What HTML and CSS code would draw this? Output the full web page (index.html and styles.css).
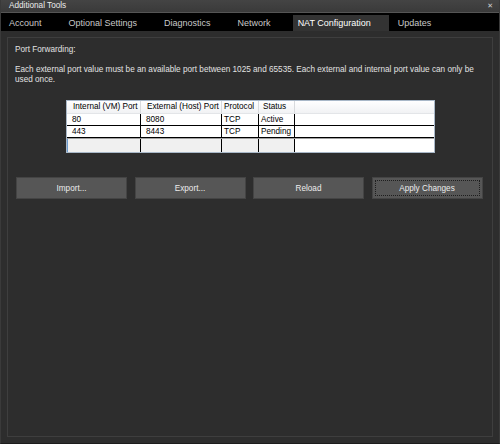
FILE: index.html
```html
<!DOCTYPE html>
<html>
<head>
<meta charset="utf-8">
<link rel="stylesheet" href="styles.css">
</head>
<body>
<div class="window">
  <div class="titlebar">
    <span class="title">Additional Tools</span>
    <span class="close">&#x2715;</span>
  </div>
  <div class="tabs">
    <div class="tab">Account</div>
    <div class="tab">Optional Settings</div>
    <div class="tab">Diagnostics</div>
    <div class="tab">Network</div>
    <div class="tab active">NAT Configuration</div>
    <div class="tab">Updates</div>
  </div>
  <div class="frame">
    <div class="panel">
      <div class="label">Port Forwarding:</div>
      <div class="desc">Each external port value must be an available port between 1025 and 65535. Each external and internal port value can only be used once.</div>
      <div class="grid">
        <div class="row head">
          <div class="c c1">Internal (VM) Port</div>
          <div class="c c2">External (Host) Port</div>
          <div class="c c3">Protocol</div>
          <div class="c c4">Status</div>
          <div class="c c5"></div>
        </div>
        <div class="row data">
          <div class="c c1">80</div>
          <div class="c c2">8080</div>
          <div class="c c3">TCP</div>
          <div class="c c4">Active</div>
          <div class="c c5"></div>
        </div>
        <div class="row data">
          <div class="c c1">443</div>
          <div class="c c2">8443</div>
          <div class="c c3">TCP</div>
          <div class="c c4">Pending</div>
          <div class="c c5"></div>
        </div>
        <div class="row newrow">
          <div class="c c1"></div>
          <div class="c c2"></div>
          <div class="c c3"></div>
          <div class="c c4"></div>
          <div class="c c5"></div>
        </div>
      </div>
      <div class="buttons">
        <div class="btn">Import...</div>
        <div class="btn">Export...</div>
        <div class="btn">Reload</div>
        <div class="btn focus"><span class="focusring">Apply Changes</span></div>
      </div>
    </div>
  </div>
</div>
</body>
</html>
```
FILE: styles.css
```css
html, body {
  margin: 0;
  padding: 0;
  background: #2d2d2d;
}
body {
  font-family: "Liberation Sans", Arial, sans-serif;
  font-size: 8.2px;
  color: #e2e2e2;
}
.window {
  width: 500px;
  height: 444px;
  box-sizing: border-box;
  background: #2d2d2d;
  border-left: 1px solid #3a3a3a;
  border-right: 1px solid #3a3a3a;
  border-bottom: 1px solid #1c1c1c;
  display: flex;
  flex-direction: column;
  overflow: hidden;
}
.titlebar {
  height: 13px;
  box-sizing: border-box;
  background: linear-gradient(#444444, #3a3a3a);
  border-bottom: 1px solid #555555;
  display: flex;
  align-items: center;
  justify-content: space-between;
  padding: 0 7px 0 9px;
  margin: 0 -1px;
}
.title {
  font-size: 8.2px;
  color: #ececec;
  line-height: 12px;
}
.close {
  font-size: 7px;
  color: #cfcfcf;
  line-height: 12px;
  font-family: "DejaVu Sans", sans-serif;
}
.tabs {
  height: 18px;
  background: #000000;
  display: flex;
  align-items: stretch;
  padding-left: 4px;
  padding-top: 2px;
  box-sizing: border-box;
  margin: 0 -1px;
}
.tab {
  font-size: 9px;
  color: #c9c9c9;
  padding: 0 22px 0 5px;
  display: flex;
  align-items: center;
  padding-bottom: 1px;
}
.tab.active {
  background: #333333;
  color: #ffffff;
  padding-right: 18px;
  margin-right: 4px;
}
.frame {
  flex: 1;
  padding: 6px 6px 6px 6px;
  display: flex;
}
.panel {
  flex: 1;
  border: 1px solid #3e3e3e;
  padding: 7px 7px;
}
.label {
  line-height: 10px;
}
.desc {
  line-height: 9.5px;
  margin-top: 10px;
  width: 462px;
}
.grid {
  margin: 16px 0 0 51px;
  width: 369px;
  border: 1px solid #a9b8c8;
  background: #ffffff;
  color: #000000;
  box-sizing: border-box;
}
.row {
  display: flex;
  box-sizing: border-box;
}
.c {
  box-sizing: border-box;
  padding-left: 5px;
  white-space: nowrap;
  overflow: hidden;
}
.c1 { width: 74px; }
.c2 { width: 81px; }
.c3 { width: 37px; }
.c4 { width: 36px; }
.c5 { flex: 1; }
.head {
  height: 13px;
  background: linear-gradient(#ffffff, #f1f2f4);
  border-bottom: 1px solid #e3e5e8;
  line-height: 12px;
}
.head .c {
  border-right: 1px solid #d8dadd;
  padding-left: 6px;
}
.head .c3 { padding-left: 2px; }
.head .c4 { padding-left: 4px; }
.head .c5 { border-right: none; }
.data {
  height: 12px;
  line-height: 11px;
  border-bottom: 1px solid #000000;
}
.data .c {
  border-right: 1px solid #000000;
}
.data .c3, .data .c4 { padding-left: 2px; }
.data .c5 { border-right: none; }
.newrow {
  height: 14px;
  border-top: 1px solid #a0a0a0;
}
.newrow .c {
  background: #f0f0f0;
  border-right: 1px solid #000000;
}
.newrow .c1 {
  border-left: 1px solid #6d9ccf;
}
.newrow .c5 {
  background: #ffffff;
  border-right: none;
}
.buttons {
  display: flex;
  gap: 7.5px;
  margin: 24px 0 0 1px;
}
.btn {
  width: 111px;
  height: 22px;
  box-sizing: border-box;
  background: #565656;
  border: 1px solid #444444;
  color: #ececec;
  display: flex;
  align-items: center;
  justify-content: center;
}
.btn.focus {
  padding: 2px;
}
.focusring {
  flex: 1;
  align-self: stretch;
  display: flex;
  align-items: center;
  justify-content: center;
  border: 1px dotted #1e1e1e;
}
```
